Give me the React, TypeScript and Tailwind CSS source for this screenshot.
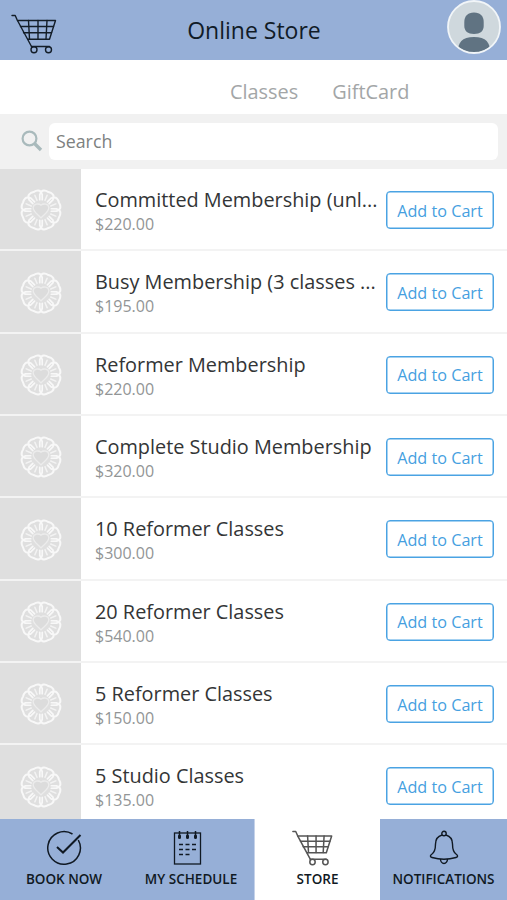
import React from "react";

const products = [
  { name: "Committed Membership (unl...", price: "$220.00" },
  { name: "Busy Membership (3 classes ...", price: "$195.00" },
  { name: "Reformer Membership", price: "$220.00" },
  { name: "Complete Studio Membership", price: "$320.00" },
  { name: "10 Reformer Classes", price: "$300.00" },
  { name: "20 Reformer Classes", price: "$540.00" },
  { name: "5 Reformer Classes", price: "$150.00" },
  { name: "5 Studio Classes", price: "$135.00" },
];

function Cart({ className, weight }: { className: string; weight: number }) {
  return (
    <svg viewBox="0 0 46 40" className={className} fill="none" stroke="currentColor" strokeWidth={weight} strokeLinecap="round" strokeLinejoin="round">
      <path d="M1 1.5h3.200l2 4.500L20.500 32.500" />
      <path d="M6.500 6.500h38L38.500 25.300H17" />
      <path d="M9.500 12.500h33M12.500 18.700h28M17.500 6.500l1 18.500M27 6.500V25M36 6.500L35 25" />
      <path d="M20.500 32.500h18" />
      <circle cx="23" cy="35.700" r="3" />
      <circle cx="37.500" cy="35.700" r="3" />
    </svg>
  );
}

const petals = [22.5, 67.5, 112.5, 157.5, 202.5, 247.5, 292.5, 337.5];

function Flower() {
  return (
    <svg viewBox="-21 -21 42 42" className="size-[42px]" fill="none" stroke="#f8f8f8" strokeLinecap="round" strokeLinejoin="round">
      {petals.map((a) => (
        <g key={a} transform={`rotate(${a})`}>
          <path strokeWidth="2" d="M-6.300 -15.300C-7.500 -19 -3.500 -20 0 -19.400C3.500 -20 7.500 -19 6.300 -15.300" />
          <path strokeWidth="1.700" d="M-2.800 -10L-5 -15.200M2.800 -10L5 -15.200" />
          <path strokeWidth="1.600" opacity=".8" d="M0 -10.500V-16" />
        </g>
      ))}
      <path stroke="#ececec" strokeWidth="1.300" fill="#dcdcdc" d="M0 8C-2 5-8 2-7.800-2.500C-7.500-6.800-2-6.500 0-4.800C2-6.500 7.500-6.800 7.800-2.500C8 2 2 5 0 8Z" />
    </svg>
  );
}

export default function App() {
  return (
    <div className="flex h-[900px] w-[507px] flex-col overflow-hidden bg-white font-['Open_Sans','Noto_Sans',sans-serif]">
      <header className="flex h-[60px] shrink-0 items-center justify-between bg-[#96afd7] pl-[11px] pr-[6px]">
        <Cart className="mt-[7px] h-[40px] w-[46px] text-[#131d28]" weight={1.4} />
        <h1 className="ml-[4px] text-[23px] leading-[30px] text-[#111b27]">Online Store</h1>
        <svg viewBox="0 0 54 54" className="mb-[6px] size-[54px]">
          <defs>
            <clipPath id="avatar"><circle cx="27" cy="27" r="25.500" /></clipPath>
          </defs>
          <circle cx="27" cy="27" r="26" fill="#cfd8dd" />
          <g clipPath="url(#avatar)" fill="#607382">
            <path d="M27 12.500c6.500 0 9.700 4 9.700 9.500v4c0 5-3.500 8-9.700 8s-9.700-3-9.700-8v-4c0-5.500 3.200-9.500 9.700-9.500Z" />
            <path d="M10.500 54c0-11 4-17 16.500-17S43.500 43 43.500 54Z" />
          </g>
          <circle cx="27" cy="27" r="26" fill="none" stroke="#f1f5f8" strokeWidth="1.800" />
        </svg>
      </header>

      <nav className="flex h-[54px] shrink-0 items-center gap-[34px] pl-[230px] pt-[10px] text-[19.9px] leading-[28px] text-[#a3a6a7]">
        <span>Classes</span>
        <span>GiftCard</span>
      </nav>

      <div className="flex h-[55px] shrink-0 items-center bg-[#f1f1f1] pl-[21px] pr-[9px]">
        <svg viewBox="0 0 22 22" className="mb-[2px] mr-[6px] size-[22px]" fill="none" stroke="#a9babc">
          <circle cx="8.500" cy="8.500" r="6.900" strokeWidth="2.200" />
          <path d="M13.500 13.500L20 20" strokeWidth="3.400" />
        </svg>
        <div className="flex h-[37px] flex-1 items-center rounded-[6px] bg-white pl-[7px] text-[17.8px] text-[#7d8180]">Search</div>
      </div>

      <main className="h-[650px] shrink-0 overflow-hidden">
        {products.map((p) => (
          <section key={p.name} className="flex h-[82.35px] border-b-2 border-[#f3f3f3]">
            <div className="flex w-[81px] shrink-0 items-center justify-center bg-[#dfdfdf] pt-[2px]">
              <Flower />
            </div>
            <div className="w-[305px] shrink-0 whitespace-nowrap pl-[14px] pt-[17px]">
              <h2 className="text-[19.87px] leading-[28px] text-[#333536]">{p.name}</h2>
              <p className="text-[16px] leading-[20px] text-[#929596]">{p.price}</p>
            </div>
            <button className="mt-[22px] h-[38px] w-[108px] rounded-[4px] border border-[#4aa3e3] pt-[1px] text-[16.2px] leading-[24px] text-[#469fdf] shadow-[inset_0_0_0_0.5px_#4aa3e3]">
              Add to Cart
            </button>
          </section>
        ))}
      </main>

      <footer className="flex h-[81px] shrink-0 bg-[#96afd7] text-[13.5px] font-semibold leading-[18px] text-[#101923]">
        <div className="flex w-[128px] flex-col items-center pt-[11px]">
          <svg viewBox="0 0 36 36" className="mb-[4px] size-[36px]" fill="none" stroke="#101923" strokeWidth="1.500">
            <path d="M26.500 4A16.300 16.300 0 1 0 32.300 10" />
            <path d="M11 17l6 5.500L34.500 5" strokeWidth="2" />
          </svg>
          <span>BOOK NOW</span>
        </div>
        <div className="flex w-[126px] flex-col items-center pt-[11px]">
          <svg viewBox="0 0 30 36" className="mb-[4px] mr-[6px] h-[36px] w-[30px]" fill="none" stroke="#101923" strokeWidth="1.300">
            <rect x="1.500" y="3" width="26" height="31" />
            <path d="M6.500 1v6M14.500 1v6M22.500 1v6" strokeWidth="1.500" />
            <path d="M6.500 6v1.500M14.500 6v1.500M22.500 6v1.500" strokeWidth="3" strokeLinecap="round" />
            <path d="M6 14.500h4M12.500 14.500h4M19 14.500h4M6 19.500h4M12.500 19.500h4M19 19.500h4M6 24.500h4M12.500 24.500h4" strokeWidth="1.700" />
          </svg>
          <span>MY SCHEDULE</span>
        </div>
        <div className="-mr-px flex w-[126px] flex-col items-center border-l border-[#c5d2e9] bg-white pt-[11px]">
          <Cart className="mb-[4px] mr-[11px] h-[36px] w-[41px] text-[#555]" weight={1.7} />
          <span>STORE</span>
        </div>
        <div className="ml-px flex w-[127px] flex-col items-center pt-[11px]">
          <svg viewBox="0 0 30 36" className="mb-[4px] h-[36px] w-[30px]" fill="none" stroke="#101923" strokeWidth="1.400">
            <circle cx="15" cy="3.500" r="2.200" />
            <path d="M13 5C8 6.500 6.500 9 6.500 14C6.500 20 5 23 2.500 24.500C1 25.500 1 27 3 27.500C10 29.500 20 29.500 27 27.500C29 27 29 25.500 27.500 24.500C25 23 23.500 20 23.500 14C23.500 9 22 6.500 17 5" />
            <path d="M11.500 29a3.500 4.500 0 0 0 7 0" />
          </svg>
          <span>NOTIFICATIONS</span>
        </div>
      </footer>
    </div>
  );
}
